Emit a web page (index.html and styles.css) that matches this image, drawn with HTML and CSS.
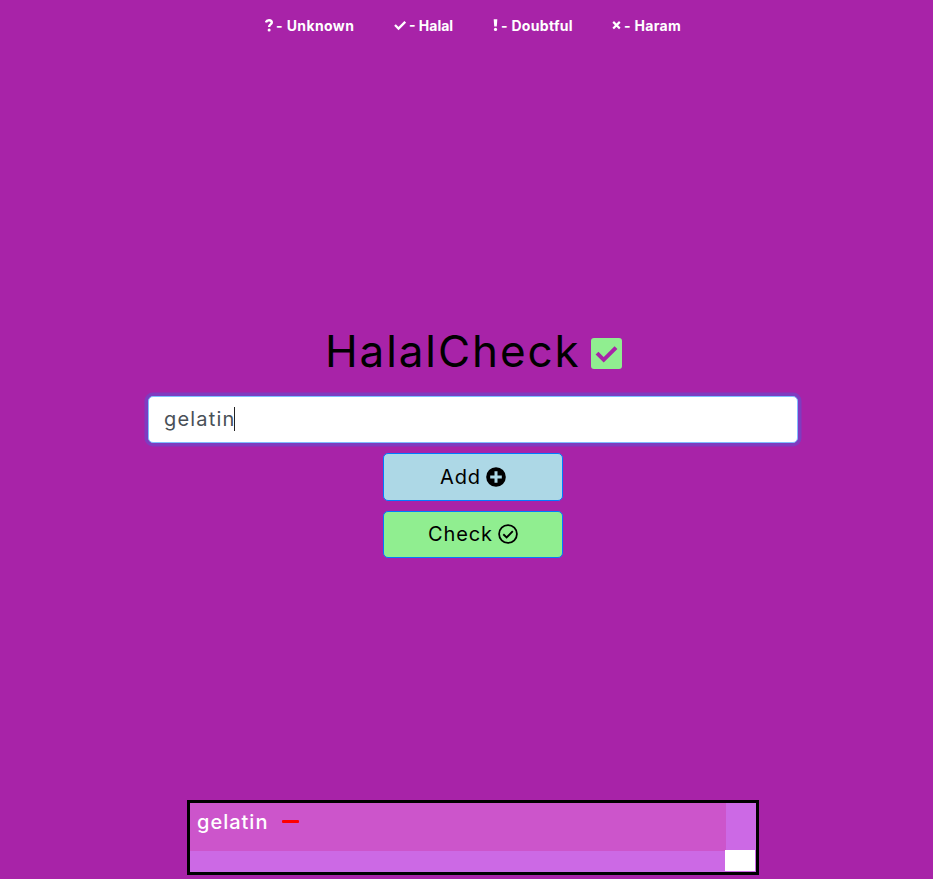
FILE: index.html
```html
<!DOCTYPE html>
<html lang="en">
<head>
<meta charset="utf-8">
<title>HalalCheck</title>
<link rel="stylesheet" href="styles.css">
</head>
<body>
<header class="legend">
  <div class="key unknown"><svg class="mark" viewBox="0 0 8 14"><path d="M1 4.4C1.3 2.9 2.5 2.2 4 2.2C5.8 2.2 6.8 3.2 6.8 4.5C6.8 6.5 4.1 6.3 4.1 9" fill="none" stroke="currentColor" stroke-width="2.4"/><circle cx="4.1" cy="11.9" r="1.5" fill="currentColor"/></svg><span>- Unknown</span></div>
  <div class="key halal"><svg class="mark" viewBox="0 0 12 14"><path d="M1 7L4.5 10.5L11.2 3.8" fill="none" stroke="currentColor" stroke-width="2.3"/></svg><span>- Halal</span></div>
  <div class="key doubtful"><svg class="mark" viewBox="0 0 5 14"><path d="M.7 1.2H4.3L3.8 8.5H1.2Z" fill="currentColor"/><circle cx="2.5" cy="11.4" r="1.6" fill="currentColor"/></svg><span>- Doubtful</span></div>
  <div class="key haram"><svg class="mark" viewBox="0 0 9 14"><path d="M1.2 3.9L7.8 10.5M7.8 3.9L1.2 10.5" fill="none" stroke="currentColor" stroke-width="2.2"/></svg><span>- Haram</span></div>
</header>
<main class="checker">
  <h1 class="title"><span>HalalCheck</span><svg class="logo" viewBox="0 0 31 31"><rect width="31" height="31" rx="3" fill="#90ee90"/><path d="M6 15.2L12.7 21.8L25 9.6" fill="none" stroke="#a823a8" stroke-width="4"/></svg></h1>
  <div class="field"><span class="value">gelatin</span><span class="caret"></span></div>
  <button class="btn add"><span>Add</span><svg viewBox="0 0 20 20"><circle cx="10" cy="10" r="9.8"/><path d="M10 4.2V15.8M4.2 10H15.8" stroke="#add8e6" stroke-width="3"/></svg></button>
  <button class="btn check"><span>Check</span><svg viewBox="0 0 20 20" fill="none" stroke="#000"><circle cx="10" cy="10" r="8.9" stroke-width="1.8"/><path d="M5.3 10.3L8.6 13.5L14.8 7.2" stroke-width="1.9"/></svg></button>
</main>
<section class="list">
  <div class="item"><span>gelatin</span><i class="remove"></i></div>
  <div class="corner"></div>
</section>
</body>
</html>
```
FILE: styles.css
```css
* { box-sizing: border-box; }
body {
  margin: 0;
  width: 933px;
  height: 879px;
  padding-left: 13px;
  overflow: hidden;
  display: flex;
  flex-direction: column;
  align-items: center;
  background: #a823a8;
  font-family: Inter, "Open Sans", sans-serif;
}
.legend {
  display: flex;
  gap: 40px;
  height: 49px;
  padding-top: 1px;
  align-items: center;
  color: #fff;
  font-size: 14px;
  font-weight: 700;
  letter-spacing: .3px;
  white-space: nowrap;
}
.key { display: flex; align-items: center; gap: 3px; }
.mark { height: 14px; flex: none; }
.unknown { width: 89px; letter-spacing: .4px; }
.halal { width: 59px; letter-spacing: 0; }
.doubtful { width: 79px; }
.haram { width: 69px; }
.checker {
  display: flex;
  flex-direction: column;
  align-items: center;
  margin-top: 271px;
}
.title {
  display: flex;
  align-items: center;
  width: 296px;
  height: 62px;
  margin: 0 0 14px;
  font-size: 44px;
  font-weight: 400;
  letter-spacing: 1.9px;
}
.title span { width: 265px; white-space: nowrap; }
.logo { width: 31px; height: 31px; flex: none; margin: 4px -1px 0 1px; }
.field {
  display: flex;
  align-items: center;
  width: 650px;
  height: 47px;
  padding: 0 0 2px 15px;
  border: 1px solid #80bdff;
  border-radius: 5px;
  background: #fff;
  box-shadow: 0 0 0 3.5px #7f3bc0;
  color: #495057;
  font-size: 20px;
  letter-spacing: 1.2px;
}
.value { width: 70px; white-space: nowrap; }
.caret { width: 1px; height: 24px; background: #222; }
.btn {
  display: flex;
  align-items: center;
  justify-content: center;
  gap: 5px;
  width: 180px;
  height: 48px;
  margin: 10px 0 0;
  padding: 0;
  border: 1px solid #007bff;
  border-radius: 5px;
  color: #000;
  font: 400 20px Inter, sans-serif;
  letter-spacing: .9px;
}
.btn svg { width: 20px; height: 20px; }
.add { background: #add8e6; }
.check { height: 47px; padding-bottom: 1px; background: #90ee90; }
.list {
  display: grid;
  grid-template: 48px 20px / 535px 30px;
  width: 572px;
  height: 75px;
  margin-top: 242px;
  border: 3px solid #000;
  background: #cc69e5;
}
.item {
  display: flex;
  align-items: center;
  width: 536px;
  height: 48px;
  padding: 0 0 10px 7px;
  background: #cc55cb;
  color: #fff;
  font-size: 20px;
  font-weight: 500;
  letter-spacing: 1px;
}
.item span { width: 85px; }
.remove { width: 17px; height: 3px; margin-bottom: 1px; border-radius: 1px; background: #f00; }
.corner { grid-area: 2 / 2; height: 21px; margin-top: -1px; background: #fff; }
```
